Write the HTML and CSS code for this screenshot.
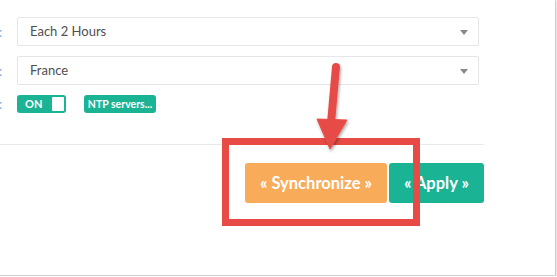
FILE: index.html
```html
<!DOCTYPE html>
<html lang="en">
<head>
    <meta charset="UTF-8">
    <meta name="viewport" content="width=device-width, initial-scale=1.0">
    <title>Time Settings</title>
    <link rel="stylesheet" href="styles.css">
</head>
<body>

<div class="panel">
    <div class="settings">
        <div class="row">
            <span class="colon">:</span>
            <div class="select">Each 2 Hours<span class="caret"></span></div>
        </div>
        <div class="row">
            <span class="colon">:</span>
            <div class="select">France<span class="caret"></span></div>
        </div>
        <div class="row">
            <span class="colon">:</span>
            <div class="switch">ON<span class="knob"></span></div>
            <button class="btn-mini">NTP servers...</button>
        </div>
    </div>

    <div class="divider"></div>

    <div class="actions">
        <button class="btn btn-warning">&laquo; Synchronize &raquo;</button>
        <button class="btn btn-primary">&laquo; Apply &raquo;</button>
    </div>

    <!-- annotation overlay -->
    <div class="callout-box"></div>
    <svg class="callout-arrow" width="50" height="100" viewBox="0 0 50 100">
        <defs>
            <filter id="shade" x="-50%" y="-50%" width="200%" height="200%">
                <feDropShadow dx="1" dy="2" stdDeviation="1.5" flood-color="#000" flood-opacity="0.35"/>
            </filter>
        </defs>
        <g filter="url(#shade)" fill="#e74c46" stroke="#e74c46">
            <line x1="26" y1="8" x2="21" y2="64" stroke-width="8" stroke-linecap="round"/>
            <polygon points="7,60 37,61 20,90" stroke-width="1" stroke-linejoin="round"/>
        </g>
    </svg>
</div>

</body>
</html>
```

FILE: styles.css
```css
body {
    margin: 0;
    background: #fff;
    font-family: Lato, "Open Sans", sans-serif;
    color: #4f4f4f;
}
.panel {
    position: relative;
    width: 556px;
    height: 276px;
    box-sizing: border-box;
    border-right: 1px solid #cfcfcf;
    border-bottom: 1px solid #cfcfcf;
    box-shadow: 1px 1px 2px rgba(0, 0, 0, 0.15);
}
.settings {
    width: 479px;
    padding-top: 17px;
    display: flex;
    flex-direction: column;
    gap: 10px;
}
.row {
    display: flex;
    align-items: center;
}
.colon {
    width: 18px;
    margin-left: -1px;
    font-size: 13px;
    color: #7aaee0;
}
.select {
    flex: 1;
    position: relative;
    height: 29px;
    box-sizing: border-box;
    border: 1px solid #e5e6e7;
    border-radius: 2px;
    padding-left: 12px;
    font-size: 13px;
    line-height: 27px;
}
.caret {
    position: absolute;
    right: 10px;
    top: 12px;
    border-left: 4px solid transparent;
    border-right: 4px solid transparent;
    border-top: 5px solid #888;
}
.switch {
    position: relative;
    width: 49px;
    height: 18px;
    box-sizing: border-box;
    background: #1ab394;
    border-radius: 3px;
    color: #fff;
    font-size: 11px;
    font-weight: bold;
    line-height: 18px;
    padding-left: 8px;
    margin-right: 18px;
}
.knob {
    position: absolute;
    right: 2px;
    top: 2px;
    width: 12px;
    height: 14px;
    background: #fff;
    border-radius: 1px;
}
.btn-mini {
    width: 72px;
    height: 18px;
    padding: 0;
    background: #1ab394;
    border: none;
    border-radius: 3px;
    color: #fff;
    font-family: Lato, sans-serif;
    font-size: 10.5px;
    font-weight: bold;
}
.divider {
    width: 484px;
    height: 1px;
    background: #e7eaec;
    margin-top: 31px;
}
.actions {
    width: 484px;
    margin-top: 18px;
    display: flex;
    justify-content: flex-end;
    gap: 2px;
}
.btn {
    height: 40px;
    border: none;
    border-radius: 3px;
    color: #fff;
    font-family: Lato, sans-serif;
    font-size: 16.5px;
    font-weight: bold;
    padding: 0;
}
.btn-warning {
    width: 142px;
    background: #f8ac59;
}
.btn-primary {
    width: 95px;
    background: #1ab394;
}
.callout-box {
    position: absolute;
    left: 222px;
    top: 138px;
    width: 198px;
    height: 88px;
    box-sizing: border-box;
    border: 7px solid #e84a45;
}
.callout-arrow {
    position: absolute;
    left: 310px;
    top: 59px;
}
```
